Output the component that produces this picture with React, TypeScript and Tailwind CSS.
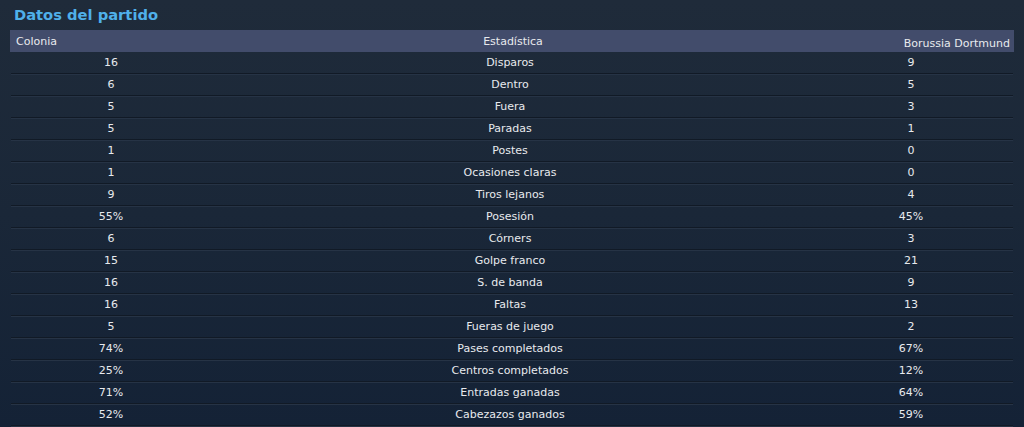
const stats: [string, string, string][] = [
  ["16", "Disparos", "9"],
  ["6", "Dentro", "5"],
  ["5", "Fuera", "3"],
  ["5", "Paradas", "1"],
  ["1", "Postes", "0"],
  ["1", "Ocasiones claras", "0"],
  ["9", "Tiros lejanos", "4"],
  ["55%", "Posesión", "45%"],
  ["6", "Córners", "3"],
  ["15", "Golpe franco", "21"],
  ["16", "S. de banda", "9"],
  ["16", "Faltas", "13"],
  ["5", "Fueras de juego", "2"],
  ["74%", "Pases completados", "67%"],
  ["25%", "Centros completados", "12%"],
  ["71%", "Entradas ganadas", "64%"],
  ["52%", "Cabezazos ganados", "59%"],
];

export default function App() {
  return (
    <div
      className="h-[427px] w-[1024px] overflow-hidden bg-gradient-to-b from-[#1f2b3a] via-[#1a2738] to-[#142236] text-[11px] text-[#e8eaee]"
      style={{ fontFamily: '"DejaVu Sans", sans-serif' }}
    >
      <h1 className="h-[30px] pl-[14px] pt-[5px] text-[14.7px] font-bold leading-[20px] text-[#4fb0ea]">
        Datos del partido
      </h1>
      <div className="mx-[10px]">
        <div className="flex h-[22px] items-center bg-[#424c6b] pl-[6px] pr-[4px] pt-px leading-[21px]">
          <div className="flex-1">Colonia</div>
          <div className="flex-1 text-center">Estadística</div>
          <div className="flex-1 pt-[4px] text-right">Borussia Dortmund</div>
        </div>
        {stats.map(([home, label, away]) => (
          <div
            key={label}
            className="mx-px flex h-[22px] items-center border-b border-[#111a26] pt-px leading-[20px] shadow-[0_1px_0_#263345]"
          >
            <div className="w-[200px] text-center">{home}</div>
            <div className="flex-1 text-center">{label}</div>
            <div className="w-[204px] text-center">{away}</div>
          </div>
        ))}
      </div>
    </div>
  );
}
